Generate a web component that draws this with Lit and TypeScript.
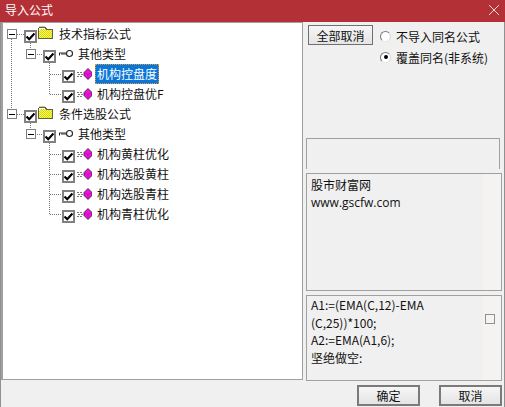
import { LitElement, html, css, svg } from "lit";
import { customElement } from "lit/decorators.js";

type Row = { depth: number; kind: "folder" | "key" | "doc"; label: string; selected?: boolean; expander: boolean };

const rows: Row[] = [
  { depth: 0, kind: "folder", label: "技术指标公式", expander: true },
  { depth: 1, kind: "key", label: "其他类型", expander: true },
  { depth: 2, kind: "doc", label: "机构控盘度", selected: true, expander: false },
  { depth: 2, kind: "doc", label: "机构控盘优F", expander: false },
  { depth: 0, kind: "folder", label: "条件选股公式", expander: true },
  { depth: 1, kind: "key", label: "其他类型", expander: true },
  { depth: 2, kind: "doc", label: "机构黄柱优化", expander: false },
  { depth: 2, kind: "doc", label: "机构选股黄柱", expander: false },
  { depth: 2, kind: "doc", label: "机构选股青柱", expander: false },
  { depth: 2, kind: "doc", label: "机构青柱优化", expander: false },
];

const folderIcon = html`<svg class="ico" width="15" height="13" viewBox="0 0 15 13" shape-rendering="crispEdges">
  <defs><pattern id="dither" width="2" height="2" patternUnits="userSpaceOnUse">
    <rect width="2" height="2" fill="#ffff20"/><rect width="1" height="1" fill="#d0d040"/><rect x="1" y="1" width="1" height="1" fill="#d0d040"/>
  </pattern></defs>
  <path d="M0.500 2.500V12.500H14.500V3.500H8.500L7.500 1.500H1.500Z" fill="url(#dither)" stroke="#5f5f4a" stroke-width="1"/>
  <path d="M2 2.500H7M1.500 3V5" stroke="#fff" fill="none"/>
  <path d="M1 0.500H7" stroke="#c9c9b8"/>
</svg>`;

const keyIcon = html`<svg class="ico" width="15" height="9" viewBox="0 0 15 9">
  <circle cx="11.500" cy="4.500" r="3" fill="#fff" stroke="#222" stroke-width="1.100"/>
  <path d="M8.500 4H1M8.500 5H3" stroke="#333" stroke-width="1" fill="none"/>
  <path d="M1.500 4V6.500" stroke="#222" stroke-width="1" fill="none"/>
</svg>`;

const docIcon = html`<svg class="ico" width="15" height="12" viewBox="0 0 15 12">
  <path d="M0 4.500h6M1 6.500h5M0 8.500h6" stroke="#777" stroke-dasharray="2 1" shape-rendering="crispEdges"/>
  <path d="M11 0.500L15 4.500V7.500L11 11.500L7 7.500V4.500Z" fill="#f010e0" stroke="#222" stroke-width="0.800"/>
  <path d="M7.500 4.700L11 6.500L14.500 4.700M11 6.500V11" stroke="#a808a0" stroke-width="0.600" fill="none"/>
</svg>`;

const check = html`<span class="check"><svg width="9" height="9" viewBox="0 0 9 9">
  <path d="M0.500 4.500L3.200 7.200L8.500 1.500" fill="none" stroke="#000" stroke-width="2.200"/>
</svg></span>`;

const treeLines = svg`<svg class="lines" width="302" height="358" viewBox="0 22 302 358" fill="none" stroke="#777" stroke-dasharray="1 1" shape-rendering="crispEdges">
  <path d="M11.500 39V110M17 34.500H24M30.500 43V49M35 54.500H43M49.500 63V94.500M49.500 74.500H62M49.500 94.500H62"/>
  <path d="M17 114.500H24M30.500 123V129M35 134.500H43M49.500 143V214.500M49.500 154.500H62M49.500 174.500H62M49.500 194.500H62M49.500 214.500H62"/>
</svg>`;

@customElement("app-root")
export class AppRoot extends LitElement {
  static styles = css`
    :host {
      display: block;
      width: 505px;
      height: 407px;
      font-family: "Noto Sans CJK SC", "Noto Sans", sans-serif;
      font-size: 12px;
      color: #111;
    }
    .win {
      width: 505px;
      height: 407px;
      display: grid;
      grid-template-rows: 22px 358px 27px;
      background: #f0f0f0;
      border-left: 1px solid #909090;
      border-right: 1px solid #909090;
      box-sizing: border-box;
    }
    .title {
      margin: 0 -1px;
      background: #b33036;
      color: #fff;
      display: flex;
      align-items: center;
      justify-content: space-between;
      padding: 0 6px 2px 5px;
      line-height: 20px;
    }
    .title svg { display: block; margin-top: 0; }
    .main { display: grid; grid-template-columns: 302px 1fr; min-height: 0; }
    .tree {
      position: relative;
      background: #fff;
      border: 1px solid #a0a0a0;
      border-left-width: 2px;
      box-sizing: border-box;
      padding-top: 1px;
    }
    .lines { position: absolute; left: -3px; top: -1px; pointer-events: none; }
    .row {
      position: relative;
      height: 20px;
      display: flex;
      align-items: center;
      box-sizing: border-box;
    }
    .d0 { padding-left: 4px; }
    .d1 { padding-left: 23px; }
    .d2 { padding-left: 42px; }
    .exp {
      flex: none;
      border: 1px solid #808080;
      box-sizing: border-box;
      width: 10px;
      height: 10px;
      background: #fff;
      display: flex;
      align-items: center;
      justify-content: center;
      margin-right: 7px;
    }
    .exp::after { content: ""; width: 6px; height: 1px; background: #000; }
    .spacer { width: 10px; margin-right: 7px; flex: none; }
    .check {
      width: 13px;
      height: 13px;
      flex: none;
      border: 2px solid #808080;
      box-sizing: border-box;
      background: #fff;
      display: flex;
      align-items: center;
      justify-content: center;
      margin: 4px 0 0 0;
    }
    .ico { flex: none; display: block; margin-left: 2px; }
    .folder .ico { margin: -3px 0 0 1px; }
    .key .ico { margin-bottom: 2px; }
    .label { margin-left: 5px; line-height: 20px; white-space: nowrap; }
    .doc .label { margin-left: 3px; padding: 0 2px; height: 20px; }
    .doc .label.sel {
      background: #0a76d8;
      color: #fff;
      outline: 1px dotted #e89a30;
      outline-offset: -1px;
    }
    .folder .label { margin-left: 6px; }
    .side {
      display: flex;
      flex-direction: column;
      padding: 3px 2px 0 3px;
      min-height: 0;
    }
    .top { display: flex; height: 113px; gap: 7px; flex: none; }
    .btn {
      font: inherit;
      color: #111;
      background: linear-gradient(#f6f6f6, #e4e4e4);
      border: 1px solid #707070;
      padding: 0;
      box-sizing: border-box;
      height: 20px;
      line-height: 17px;
    }
    .all { width: 65px; margin-left: 2px; }
    .radios { display: flex; flex-direction: column; gap: 3px; padding-top: 2px; }
    .radio { display: flex; align-items: center; gap: 5px; height: 18px; white-space: nowrap; }
    .dot {
      width: 11px;
      height: 11px;
      border-radius: 50%;
      flex: none;
      box-sizing: border-box;
      background: #fff;
      border: 1px solid;
      border-color: #7a7a7a #d8d8d8 #e8e8e8 #7a7a7a;
      display: flex;
      align-items: center;
      justify-content: center;
    }
    .dot.on::after { content: ""; width: 4px; height: 4px; border-radius: 50%; background: #000; }
    .empty {
      height: 31px;
      flex: none;
      border: 1px solid #a0a0a0;
      border-bottom: 0;
      box-sizing: border-box;
      margin: 0 2px 4px 0;
      background: #f0f0f0;
    }
    .memo {
      border: 1px solid #a0a0a0;
      box-sizing: border-box;
      background: #f5f3f1;
      display: flex;
      position: relative;
    }
    .memo .text {
      width: 176px;
      background: #f0f0f0;
      padding: 0 0 0 4px;
      box-sizing: border-box;
      line-height: 17.5px;
      font-size: 12px;
      word-break: break-word;
    }
    .memo1 { height: 118px; flex: none; margin-bottom: 4px; }
    .memo1 .text { line-height: 17px; padding-top: 2px; }
    .memo2 { height: 86px; flex: none; }
    .latin { font-family: "Open Sans", "Noto Sans CJK SC", sans-serif; font-size: 12px; }
    .scroll {
      flex: 1;
      display: flex;
      align-items: flex-start;
      justify-content: center;
      padding: 18px 4px 0 0;
      box-sizing: border-box;
    }
    .sq { width: 8px; height: 8px; border: 1px solid #909090; background: #f4f4f4; box-sizing: content-box; }
    .foot {
      display: flex;
      justify-content: flex-end;
      align-items: flex-start;
      gap: 19px;
      padding: 5px 2px 0 0;
    }
    .foot .btn { width: 63px; height: 21px; border: 2px solid #7a7a7a; line-height: 15px; }
  `;

  render() {
    return html`<div class="win">
      <div class="title">
        <span>导入公式</span>
        <svg width="10" height="10" viewBox="0 0 10 10"><path d="M0 0L10 10M10 0L0 10" stroke="#f3d9da" stroke-width="1"/></svg>
      </div>
      <div class="main">
        <div class="tree">
          ${treeLines}
          ${rows.map(
            (r) => html`<div class="row d${r.depth} ${r.kind}">
              ${r.expander ? html`<span class="exp"></span>` : html`<span class="spacer"></span>`}
              ${check}
              ${r.kind === "folder" ? folderIcon : r.kind === "key" ? keyIcon : docIcon}
              <span class="label ${r.selected ? "sel" : ""}">${r.label}</span>
            </div>`
          )}
        </div>
        <div class="side">
          <div class="top">
            <button class="btn all">全部取消</button>
            <div class="radios">
              <label class="radio"><span class="dot"></span>不导入同名公式</label>
              <label class="radio"><span class="dot on"></span>覆盖同名(非系统)</label>
            </div>
          </div>
          <div class="empty"></div>
          <div class="memo memo1">
            <div class="text">股市财富网<br /><span class="latin">www.gscfw.com</span></div>
          </div>
          <div class="memo memo2">
            <div class="text">A1:=(EMA(C,12)-EMA (C,25))*100;<br />A2:=EMA(A1,6);<br />坚绝做空:</div>
            <div class="scroll"><span class="sq"></span></div>
          </div>
        </div>
      </div>
      <div class="foot">
        <button class="btn">确定</button>
        <button class="btn">取消</button>
      </div>
    </div>`;
  }
}
